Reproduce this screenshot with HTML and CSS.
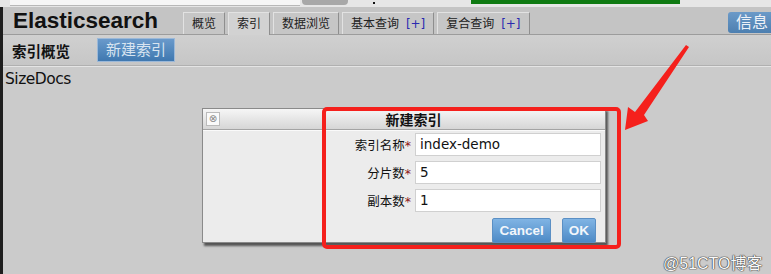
FILE: index.html
```html
<!DOCTYPE html>
<html lang="zh">
<head>
    <meta charset="UTF-8">
    <title>Elasticsearch</title>
    <link rel="stylesheet" href="styles.css">
</head>
<body>
    <div class="top-strip">
        <div class="url-box"></div>
        <div class="top-btn"></div>
        <div class="top-dot"></div>
        <div class="progress"></div>
    </div>

    <div class="page">
        <div class="header">
            <div class="logo">Elasticsearch</div>
            <div class="tabs">
                <div class="tab">概览</div>
                <div class="tab active">索引</div>
                <div class="tab">数据浏览</div>
                <div class="tab">基本查询 <span class="plus">[+]</span></div>
                <div class="tab">复合查询 <span class="plus">[+]</span></div>
            </div>
            <div class="info-btn">信息</div>
        </div>

        <div class="subheader">
            <span class="sub-title">索引概览</span>
            <span class="new-btn">新建索引</span>
        </div>

        <div class="content">SizeDocs</div>
    </div>

    <div class="dialog">
        <div class="dialog-title">
            <span class="close-icon">&#x2297;</span>
            <span class="title-text">新建索引</span>
        </div>
        <div class="dialog-body">
            <div class="form-row">
                <label>索引名称<em>*</em></label>
                <div class="field">index-demo</div>
            </div>
            <div class="form-row">
                <label>分片数<em>*</em></label>
                <div class="field">5</div>
            </div>
            <div class="form-row">
                <label>副本数<em>*</em></label>
                <div class="field">1</div>
            </div>
            <div class="dialog-buttons">
                <span class="btn">Cancel</span>
                <span class="btn">OK</span>
            </div>
        </div>
    </div>

    <!-- красная рамка и стрелка поверх скриншота -->
    <div class="mark-box"></div>
    <svg class="arrow" width="80" height="100" viewBox="0 0 80 100">
        <polygon points="64,2 67,4 22,72 26,78 3,87 6,64 13,69" fill="#f5201c"/>
    </svg>

    <div class="watermark">@51CTO博客</div>
</body>
</html>
```

FILE: styles.css
```css
body {
    margin: 0;
    background: #cbcbcb;
    font-family: "DejaVu Sans", "Noto Sans CJK SC", sans-serif;
    width: 771px;
    height: 274px;
    overflow: hidden;
    position: relative;
}

.top-strip {
    height: 7px;
    background: #e6e6e6;
    position: relative;
}

.url-box {
    position: absolute;
    left: 10px;
    top: 0;
    width: 290px;
    height: 5px;
    background: #f6f6f6;
    border-bottom: 1px solid #b8b8b8;
}

.top-btn {
    position: absolute;
    left: 302px;
    top: 0;
    width: 46px;
    height: 5px;
    background: #a8a8a8;
    border-radius: 0 0 4px 4px;
}

.top-dot {
    position: absolute;
    left: 373px;
    top: 2px;
    width: 2px;
    height: 2px;
    background: #111;
}

.progress {
    position: absolute;
    left: 471px;
    top: 0;
    width: 209px;
    height: 4px;
    background: #0f7a12;
}

.page {
    border-left: 3px solid #1e1e1e;
    height: 267px;
}

.header {
    display: flex;
    align-items: flex-end;
    height: 27px;
    background: #c4c4c4;
    border-bottom: 1px solid #9c9c9c;
}

.logo {
    width: 180px;
    padding-left: 10px;
    box-sizing: border-box;
    font-family: "Liberation Sans", Arial, sans-serif;
    font-weight: bold;
    font-size: 22.5px;
    line-height: 26px;
    color: #111;
    align-self: center;
}

.tabs {
    display: flex;
    gap: 3px;
    height: 22px;
}

.tab {
    padding: 0 8px;
    font-size: 12px;
    line-height: 22px;
    color: #222;
    background: #c6c6c6;
    border-left: 1px solid #e2e2e2;
    border-top: 1px solid #e2e2e2;
    border-right: 1px solid #8e8e8e;
    box-sizing: border-box;
    height: 22px;
}

.tab.active {
    background: #d2d2d2;
    height: 23px;
    margin-bottom: -1px;
}

.plus {
    color: #2a2ab0;
    margin-left: 3px;
}

.info-btn {
    margin-left: auto;
    align-self: center;
    margin-top: 4px;
    padding: 0 3px 0 8px;
    height: 21px;
    line-height: 21px;
    font-size: 16px;
    color: #eef2f8;
    background: linear-gradient(#6b9ac8, #4d7fb0);
    border-radius: 3px 0 0 3px;
}

.subheader {
    display: flex;
    align-items: center;
    height: 30px;
    padding-left: 9px;
    background: linear-gradient(#d0d0d0, #c6c6c6);
    border-bottom: 1px solid #b0b0b0;
    box-shadow: 0 1px 0 #e4e4e4;
}

.sub-title {
    font-weight: bold;
    font-size: 14.5px;
    color: #111;
    width: 85px;
}

.new-btn {
    padding: 0 8px;
    height: 22px;
    line-height: 22px;
    font-size: 15px;
    color: #d8e4f0;
    background: linear-gradient(#6a9acb, #3f78b0);
    border: 1px solid #9bb8d8;
}

.content {
    padding: 4px 2px;
    font-size: 15.5px;
    letter-spacing: -0.5px;
    color: #111;
}

.dialog {
    position: absolute;
    left: 202px;
    top: 108px;
    width: 402px;
    height: 133px;
    background: #ececec;
    border: 1px solid #8a8a8a;
    box-shadow: 2px 3px 2px #555;
    font-size: 12.5px;
}

.dialog-title {
    height: 20px;
    display: flex;
    align-items: center;
    background: linear-gradient(#f6f6f6, #d6d6d6);
    border-bottom: 1px solid #a4a4a4;
    box-shadow: 0 1px 0 #fafafa;
}

.close-icon {
    width: 12px;
    height: 12px;
    margin-left: 3px;
    font-size: 10px;
    line-height: 12px;
    text-align: center;
    color: #888;
    background: #fafafa;
    border: 1px solid #bbb;
}

.title-text {
    flex: 1;
    text-align: center;
    font-weight: bold;
    font-size: 14px;
    padding-left: 2px;
    color: #111;
}

.dialog-body {
    display: flex;
    flex-direction: column;
    gap: 5px;
    padding: 3px 4px 0 0;
}

.form-row {
    display: flex;
    align-items: center;
    gap: 4px;
}

.form-row label {
    width: 208px;
    text-align: right;
    color: #111;
}

.form-row em {
    font-style: normal;
    color: #8b1515;
}

.field {
    flex: 1;
    height: 21px;
    line-height: 21px;
    padding-left: 4px;
    background: #fff;
    border: 1px solid #d0d0d0;
    font-size: 13.5px;
    color: #111;
}

.dialog-buttons {
    display: flex;
    justify-content: flex-end;
    gap: 11px;
    padding-right: 5px;
    margin-top: 1px;
}

.btn {
    padding: 0 6px;
    height: 23px;
    line-height: 23px;
    font-family: "Liberation Sans", Arial, sans-serif;
    font-weight: bold;
    font-size: 13.5px;
    color: #f2f6fb;
    background: linear-gradient(#80b4e4, #4d8ac6);
    border: 1px solid #5a8fc4;
    border-radius: 2px;
}

.mark-box {
    position: absolute;
    left: 322px;
    top: 107px;
    width: 291px;
    height: 134px;
    border: 4px solid #f5201c;
    border-radius: 5px;
}

.arrow {
    position: absolute;
    left: 622px;
    top: 43px;
}

.watermark {
    position: absolute;
    left: 663px;
    top: 250px;
    font-family: "Liberation Sans", "Noto Sans CJK SC", sans-serif;
    font-size: 16px;
    color: #fafafa;
    text-shadow: 0 0 1px #333, 0 0 1px #333, 0 0 1px #333;
}
```
